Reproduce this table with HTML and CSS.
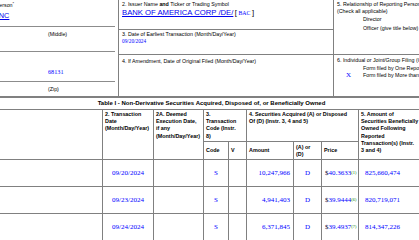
FILE: index.html
```html
<!DOCTYPE html>
<html lang="en">
<head>
<meta charset="utf-8">
<title>Form 4 - BANK OF AMERICA CORP /DE/</title>
<link rel="stylesheet" href="styles.css">
</head>
<body>
<div class="page">
  <div class="top">
    <div class="col-a">
      <div class="a-title">1. Name and Address of Reporting Person<sup>*</sup></div>
      <div class="a-name"><a class="link name-link" href="#">BERKSHIRE HATHAWAY INC</a></div>
      <div class="trip a-lbl1"><span>(Last)</span><span>(First)</span><span>(Middle)</span></div>
      <div class="trip a-street"><span class="data">3555 FARNAM STREET</span><span></span><span></span></div>
      <div class="trip a-lbl2"><span>(Street)</span><span></span><span></span></div>
      <div class="trip a-city"><span class="data">OMAHA</span><span class="data">NE</span><span class="data">68131</span></div>
      <div class="trip a-lbl3"><span>(City)</span><span>(State)</span><span>(Zip)</span></div>
    </div>

    <div class="box box2">
      <div class="l7">2. Issuer Name <b>and</b> Ticker or Trading Symbol</div>
      <div class="issuer"><a class="link issuer-link" href="#">BANK OF AMERICA CORP /DE/</a> <span class="brk">[</span> <span class="ticker">BAC</span> <span class="brk">]</span></div>
    </div>

    <div class="box box3">
      <div class="l6">3. Date of Earliest Transaction (Month/Day/Year)</div>
      <div class="box3-date data small">09/20/2024</div>
    </div>

    <div class="box box4">
      <div class="l8">4. If Amendment, Date of Original Filed (Month/Day/Year)</div>
    </div>

    <div class="box box5">
      <div class="l7">5. Relationship of Reporting Person(s) to Issuer</div>
      <div class="l7">(Check all applicable)</div>
      <div class="chk r8"><span class="mark"></span><span>Director</span><span class="mark"></span><span>10% Owner</span></div>
      <div class="chk r9"><span class="mark"></span><span>Officer (give title below)</span><span class="mark"></span><span>Other (specify below)</span></div>
    </div>

    <div class="box box6">
      <div class="l7">6. Individual or Joint/Group Filing (Check Applicable Line)</div>
      <div class="chk r7"><span class="mark"></span><span>Form filed by One Reporting Person</span></div>
      <div class="chk r8"><span class="mark data">X</span><span>Form filed by More than One Reporting Person</span></div>
    </div>
  </div>

  <div class="t1">
    <div class="t1-title">Table I - Non-Derivative Securities Acquired, Disposed of, or Beneficially Owned</div>

    <div class="th span2">1. Title of Security (Instr. 3)</div>
    <div class="th span2">2. Transaction<br>Date<br>(Month/Day/Year)</div>
    <div class="th span2">2A. Deemed<br>Execution Date,<br>if any<br>(Month/Day/Year)</div>
    <div class="th wide2">3.<br>Transaction<br>Code (Instr.<br>8)</div>
    <div class="th wide3">4. Securities Acquired (A) or Disposed<br>Of (D) (Instr. 3, 4 and 5)</div>
    <div class="th span2">5. Amount of<br>Securities Beneficially<br>Owned Following<br>Reported<br>Transaction(s) (Instr.<br>3 and 4)</div>
    <div class="th span2">6. Ownership<br>Form: Direct<br>(D) or<br>Indirect (I)<br>(Instr. 4)</div>
    <div class="th span2">7. Nature<br>of Indirect<br>Beneficial<br>Ownership<br>(Instr. 4)</div>

    <div class="sh">Code</div>
    <div class="sh">V</div>
    <div class="sh">Amount</div>
    <div class="sh">(A) or<br>(D)</div>
    <div class="sh">Price</div>

    <div class="td sec data">Common Stock</div>
    <div class="td ctr data">09/20/2024</div>
    <div class="td"></div>
    <div class="td ctr data">S</div>
    <div class="td"></div>
    <div class="td rgt data">10,247,966</div>
    <div class="td ctr data">D</div>
    <div class="td price"><span class="dollar">$</span><span class="data">40.3633</span><sup class="fn">(1)</sup></div>
    <div class="td hold data">825,660,474</div>
    <div class="td ctr data">I</div>
    <div class="td data">By Subsidiaries</div>

    <div class="td sec data">Common Stock</div>
    <div class="td ctr data">09/23/2024</div>
    <div class="td"></div>
    <div class="td ctr data">S</div>
    <div class="td"></div>
    <div class="td rgt data">4,941,403</div>
    <div class="td ctr data">D</div>
    <div class="td price"><span class="dollar">$</span><span class="data">39.9444</span><sup class="fn">(6)</sup></div>
    <div class="td hold data">820,719,071</div>
    <div class="td ctr data">I</div>
    <div class="td data">By Subsidiaries</div>

    <div class="td sec data">Common Stock</div>
    <div class="td ctr data">09/24/2024</div>
    <div class="td"></div>
    <div class="td ctr data">S</div>
    <div class="td"></div>
    <div class="td rgt data">6,371,845</div>
    <div class="td ctr data">D</div>
    <div class="td price"><span class="dollar">$</span><span class="data">39.4937</span><sup class="fn">(7)</sup></div>
    <div class="td hold data">814,347,226</div>
    <div class="td ctr data">I</div>
    <div class="td data">By Subsidiaries</div>
  </div>
</div>
</body>
</html>
```

FILE: styles.css
```css
* { box-sizing: border-box; }

html, body {
  margin: 0;
  padding: 0;
  background: #ffffff;
}

body {
  width: 419px;
  height: 240px;
  overflow: hidden;
  font-family: "Liberation Sans", Arial, sans-serif;
  font-size: 5.3px;
  color: #000000;
}

.page {
  margin-left: -91px;
  width: 605px;
}

.data {
  font-family: "Liberation Serif", "Times New Roman", serif;
  color: #0000ff;
  font-size: 7px;
}

.data.small { font-size: 5.3px; }

.link {
  color: #0000ee;
  text-decoration: underline;
}

sup {
  font-size: 4px;
  line-height: 0;
  vertical-align: 2px;
}

/* ---------- top section ---------- */
.top {
  display: grid;
  grid-template-columns: 210px 215px 180px;
  grid-template-rows: 30px 25px 42px;
}

.col-a {
  grid-column: 1;
  grid-row: 1 / 4;
  border-right: 1px solid #808080;
  border-bottom: 1px solid #808080;
  padding: 0 3px 0 2px;
}

.a-title { height: 10px; line-height: 10px; white-space: nowrap; padding-left: 2px; }

.a-name {
  height: 17px;
  line-height: 12px;
  padding-bottom: 4px;
  border-bottom: 1px solid #8c8c8c;
  white-space: nowrap;
}

.name-link { font-size: 7.3px; }

.trip {
  display: grid;
  grid-template-columns: 69px 66px 69px;
  white-space: nowrap;
}

.trip > span { padding-left: 2px; }

.trip > span:first-child { padding-left: 0; }

.a-lbl1 { height: 15px; line-height: 15px; }
.a-street { height: 10px; line-height: 9px; border-bottom: 1px solid #8c8c8c; }
.a-lbl2 { height: 10px; line-height: 10px; }
.a-city { height: 20px; line-height: 19px; border-bottom: 1px solid #8c8c8c; }
.a-city .data { font-size: 6.2px; }
.a-lbl3 { height: 14px; line-height: 14px; }

.box {
  border-right: 1px solid #808080;
  border-bottom: 1px solid #808080;
  padding: 1px 3px 0 3px;
  white-space: nowrap;
}

.box2 { grid-column: 2; grid-row: 1; }
.box3 { grid-column: 2; grid-row: 2; }
.box4 { grid-column: 2; grid-row: 3; padding-top: 2px; }
.box5 { grid-column: 3; grid-row: 1 / 3; }
.box6 { grid-column: 3; grid-row: 3; padding-top: 2px; }

.l6 { line-height: 6px; }
.l7 { line-height: 7px; }
.l8 { line-height: 8px; }

.issuer { line-height: 10px; }
.issuer-link { font-size: 7.7px; }
.brk { font-size: 7.7px; }
.ticker {
  font-family: "Liberation Serif", "Times New Roman", serif;
  color: #0000ff;
  font-size: 5.8px;
}

.box3-date { line-height: 8px; }

.chk {
  display: flex;
  align-items: center;
}

.chk .mark {
  width: 23px;
  margin-right: 3px;
  text-align: center;
  flex: none;
}

.chk > span:nth-child(2) { width: 70px; }

.r7 { height: 7px; }
.r8 { height: 8px; }
.r9 { height: 9px; }

/* ---------- table I ---------- */
.t1 {
  display: grid;
  grid-template-columns: 193px 51px 50px 25px 18px 47px 28px 37px 72px 40px 43px;
  grid-template-rows: 12px 32px 18px 27px 27px 27px;
  border-top: 1px solid #808080;
  border-left: 1px solid #808080;
}

.t1 > div {
  border-right: 1px solid #808080;
  border-bottom: 1px solid #808080;
  white-space: nowrap;
}

.t1-title {
  grid-column: 1 / -1;
  text-align: center;
  font-weight: bold;
  font-size: 6px;
  line-height: 11px;
}

.th {
  font-weight: bold;
  font-size: 5.4px;
  line-height: 7.2px;
  padding: 1px 2px 0 2px;
}

.span2 { grid-row: span 2; }
.wide2 { grid-column: span 2; }
.wide3 { grid-column: span 3; }

.sh {
  font-weight: bold;
  font-size: 5.4px;
  line-height: 6.6px;
  padding: 0 2px;
  display: flex;
  align-items: center;
}

.td {
  display: flex;
  align-items: center;
  padding: 0 2px 1px 2px;
}

.ctr { justify-content: center; }
.rgt { justify-content: flex-end; padding-right: 3px; }
.price { padding-left: 3px; }
.hold { padding-left: 6px; }

.dollar {
  font-family: "Liberation Serif", "Times New Roman", serif;
  font-size: 7px;
  color: #000033;
}

.fn {
  font-family: "Liberation Serif", "Times New Roman", serif;
  color: #008000;
  font-size: 4.4px;
}
```
